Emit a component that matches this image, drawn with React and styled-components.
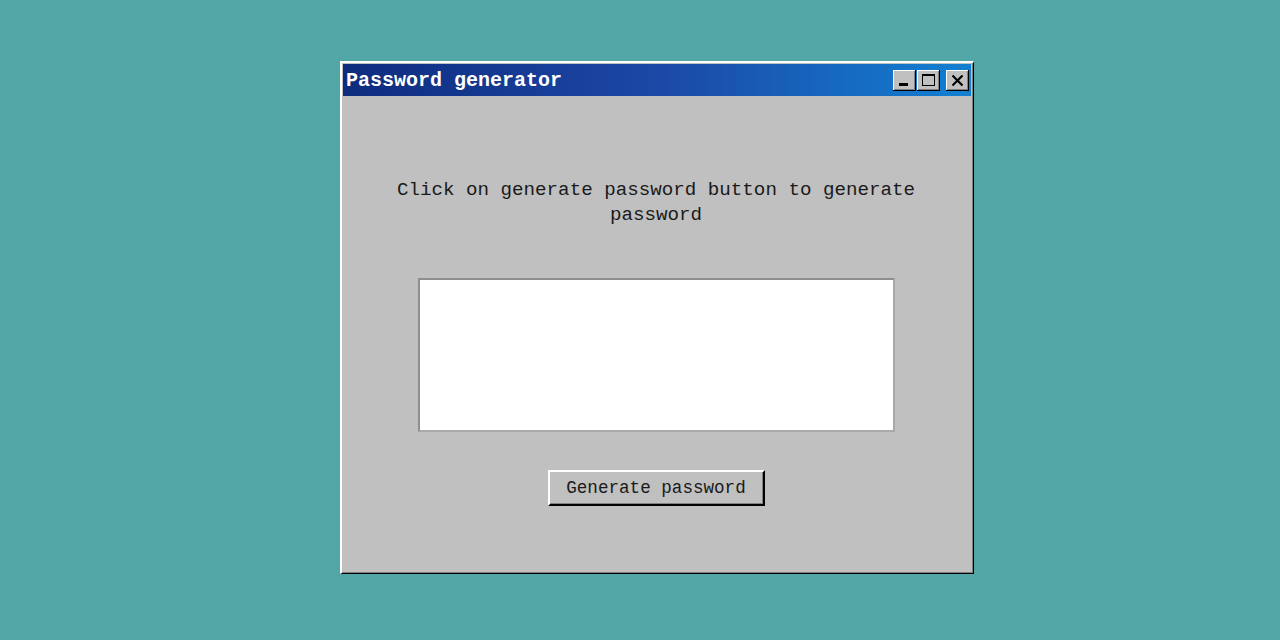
import React from 'react';
import styled, { createGlobalStyle } from 'styled-components';

const GlobalStyle = createGlobalStyle`
    html, body {
        margin: 0;
        padding: 0;
        background-color: #52a6a6;
    }
`

const Pagina = styled.div`
    width: 1280px;
    height: 640px;
    box-sizing: border-box;
    padding: 61px 0 0 340px;
    font-family: "Liberation Mono", "DejaVu Sans Mono", monospace;
`

const Janela = styled.div`
    width: 634px;
    height: 513px;
    box-sizing: border-box;
    background-color: #c0c0c0;
    border-top: 2px solid #ffffff;
    border-left: 2px solid #ffffff;
    border-right: 1px solid #000000;
    border-bottom: 1px solid #000000;
    box-shadow: inset -1px -1px 0 #808080;
    padding: 1px 2px 2px 1px;
    display: flex;
    flex-direction: column;
`

const BarraTitulo = styled.div`
    height: 32px;
    display: flex;
    align-items: center;
    justify-content: space-between;
    padding: 0 2px 0 3px;
    background: linear-gradient(90deg, #0e2c7e 0%, #1c48a6 50%, #1280d2 100%);
`

const Titulo = styled.span`
    color: #ffffff;
    font-size: 20px;
    font-weight: bold;
`

const GrupoBotoes = styled.div`
    display: flex;
    align-items: center;
`

const BotaoJanela = styled.button`
    width: 23px;
    height: 21px;
    padding: 0;
    margin-left: ${props => props.$espaco || 0}px;
    background-color: #c0c0c0;
    border: none;
    box-shadow: inset -1px -1px 0 #000000, inset 1px 1px 0 #ffffff, inset -2px -2px 0 #808080;
    display: flex;
    align-items: center;
    justify-content: center;
`

const Conteudo = styled.div`
    flex: 1;
    display: flex;
    flex-direction: column;
    align-items: center;
    padding: 82px 2px 0 0;
`

const Texto = styled.p`
    margin: 0;
    width: 540px;
    text-align: center;
    font-size: 19.2px;
    line-height: 25px;
    color: #1a1a1a;
`

const CaixaSenha = styled.textarea`
    margin-top: 50px;
    width: 477px;
    height: 154px;
    box-sizing: border-box;
    background-color: #ffffff;
    border-top: 2px solid #8e8e8e;
    border-left: 2px solid #8e8e8e;
    border-right: 2px solid #a9a9a9;
    border-bottom: 2px solid #a9a9a9;
    resize: none;
    outline: none;
    font-family: inherit;
    font-size: 18px;
`

const BotaoGerar = styled.button`
    margin-top: 38px;
    width: 217px;
    height: 36px;
    box-sizing: border-box;
    background-color: #c0c0c0;
    border-top: 2px solid #ffffff;
    border-left: 2px solid #ffffff;
    border-right: 2px solid #000000;
    border-bottom: 2px solid #000000;
    box-shadow: inset -1px -1px 0 #808080;
    font-family: "Liberation Mono", "DejaVu Sans Mono", monospace;
    font-size: 17.6px;
    color: #1a1a1a;
    padding: 0;
`

function IconeMinimizar() {
    return (
        <svg width="23" height="21" viewBox="0 0 23 21">
            <rect x="6" y="13" width="9" height="3" fill="#000" />
        </svg>
    )
}

function IconeMaximizar() {
    return (
        <svg width="23" height="21" viewBox="0 0 23 21">
            <rect x="5.5" y="4.5" width="12" height="11" fill="none" stroke="#000" strokeWidth="1" />
            <rect x="5" y="4" width="13" height="2" fill="#000" />
        </svg>
    )
}

function IconeFechar() {
    return (
        <svg width="23" height="21" viewBox="0 0 23 21">
            <path d="M6.5 5.5 L16.5 15.5 M16.5 5.5 L6.5 15.5" stroke="#000" strokeWidth="2.2" />
        </svg>
    )
}

function App() {
    return (
        <Pagina>
            <GlobalStyle />
            <Janela>
                <BarraTitulo>
                    <Titulo>Password generator</Titulo>
                    <GrupoBotoes>
                        <BotaoJanela><IconeMinimizar /></BotaoJanela>
                        <BotaoJanela $espaco={1}><IconeMaximizar /></BotaoJanela>
                        <BotaoJanela $espaco={6}><IconeFechar /></BotaoJanela>
                    </GrupoBotoes>
                </BarraTitulo>
                <Conteudo>
                    <Texto>Click on generate password button to generate password</Texto>
                    <CaixaSenha readOnly value="" />
                    <BotaoGerar>Generate password</BotaoGerar>
                </Conteudo>
            </Janela>
        </Pagina>
    )
}

export default App
